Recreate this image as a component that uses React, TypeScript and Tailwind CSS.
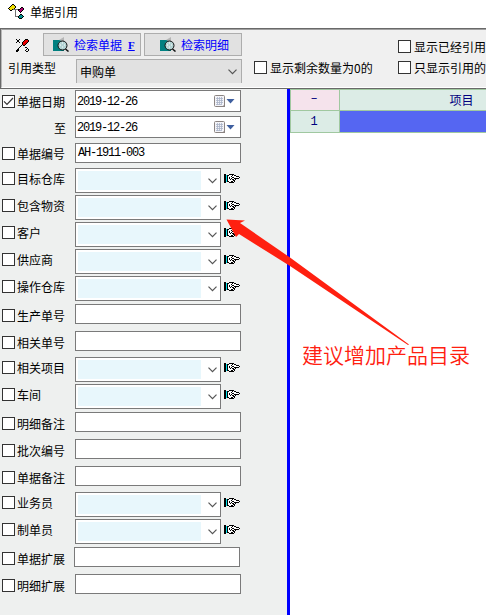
import { clsx } from 'clsx';

type Row = {
  label: string;
  kind: 'date' | 'text' | 'combo';
  size: string;
  value?: string;
  checked?: boolean;
  noCheck?: boolean;
  shift?: boolean;
};

const rows: Row[] = [
  { label: '单据日期', kind: 'date', size: 'h-[26px]', value: '2019-12-26', checked: true },
  { label: '至', kind: 'date', size: 'h-[27px]', value: '2019-12-26', noCheck: true },
  { label: '单据编号', kind: 'text', size: 'h-[25px]', value: 'AH-1911-003' },
  { label: '目标仓库', kind: 'combo', size: 'h-[27px]' },
  { label: '包含物资', kind: 'combo', size: 'h-[27px]' },
  { label: '客户', kind: 'combo', size: 'h-[27px]' },
  { label: '供应商', kind: 'combo', size: 'h-[27px]' },
  { label: '操作仓库', kind: 'combo', size: 'h-[28px]' },
  { label: '生产单号', kind: 'text', size: 'h-[27px]' },
  { label: '相关单号', kind: 'text', size: 'h-[26px]' },
  { label: '相关项目', kind: 'combo', size: 'h-[27px]' },
  { label: '车间', kind: 'combo', size: 'h-[28px]' },
  { label: '明细备注', kind: 'text', size: 'h-[27px]' },
  { label: '批次编号', kind: 'text', size: 'h-[27px]' },
  { label: '单据备注', kind: 'text', size: 'h-[26px]' },
  { label: '业务员', kind: 'combo', size: 'h-[27px]' },
  { label: '制单员', kind: 'combo', size: 'h-[28px]' },
  { label: '单据扩展', kind: 'text', size: 'h-[27px]', shift: true },
  { label: '明细扩展', kind: 'text', size: 'h-[27px]' },
];

const palette: Record<string, string> = {
  k: '#000000',
  w: '#ffffff',
  c: '#00e0e8',
  t: '#009090',
  y: '#f0e000',
  m: '#b00070',
  r: '#e80000',
  g: '#707070',
};

const hand = [
  'kk...kkkkk......',
  'kkckkwwwkwkk....',
  'kkckwwwkwwwwkkk.',
  'kkckwkwwkkwwwwwk',
  'kkckwkwkwwkkkkk.',
  'kkckwwkwkkwk....',
  'kkckwwwwwkk.....',
  'kkckkwwkkwk.....',
  'kk...kkkkk......',
];

const tree = [
  '....kk..........',
  '...kyyk.........',
  '..kyyyyk........',
  '.kyyyyyk.....kk.',
  'kyyyyyk.....kmmk',
  '.kyykgggggkkmmmk',
  '..kk...g..kmmmk.',
  '.......g...kmk..',
  '.......g....k...',
  '.......g........',
  '.......g....kk..',
  '.......g...kttk.',
  '.......gggkttttk',
  '..........ktttk.',
  '...........kkk..',
];

const tools = [
  'k..k.....kkk.',
  '.kk.....krrrk',
  '.kk....krrrrk',
  'k..k..krrrrk.',
  '......krrrk..',
  '......krrk...',
  '.....k.kk....',
  '....k........',
  '...k.....kk..',
  '..k........k.',
  '.kk.......k.k',
  'kkk......k..k',
  'kk........kk.',
];

const PixelIcon = ({ map, className }: { map: string[]; className?: string }) => (
  <svg
    width={map[0].length}
    height={map.length}
    shapeRendering="crispEdges"
    className={clsx('shrink-0', className)}
  >
    {map.flatMap((line, y) =>
      [...line].map((c, x) =>
        c === '.' ? null : <rect key={`${x}-${y}`} x={x} y={y} width="1" height="1" fill={palette[c]} />
      )
    )}
  </svg>
);

const SearchIcon = () => (
  <svg width="16" height="15" className="shrink-0">
    <path d="M0 3h11v11H0z" fill="#008080" />
    <path d="M6 3l5-3v5z" fill="#b5b5b5" />
    <circle cx="9.5" cy="8.500" r="4.500" fill="#b4d4d4" stroke="#111" strokeWidth="1" />
    <path d="M7 8h1M9 6h1M9 10h1M11 8h1" stroke="#fff" />
    <path d="M12.500 12l3 2.500" stroke="#111" strokeWidth="1.5" />
  </svg>
);

const Chevron = () => (
  <svg width="9" height="6" fill="none" stroke="#555" strokeWidth="1.2" className="shrink-0">
    <path d="M.5 .7l4 4 4-4" />
  </svg>
);

const CheckBox = ({ checked }: { checked?: boolean }) => (
  <span className="flex size-[13px] shrink-0 items-center justify-center border border-[#333] bg-white">
    {checked && (
      <svg width="11" height="11" fill="none" stroke="#333" strokeWidth="1.2">
        <path d="M1 5.3l3 3 6-6.3" />
      </svg>
    )}
  </span>
);

const CheckItem = ({ label }: { label: string }) => (
  <label className="flex h-[13px] items-center gap-[3px] whitespace-nowrap leading-[13px]">
    <CheckBox />
    <span>{label}</span>
  </label>
);

const DateIcon = () => (
  <svg width="21" height="13" className="shrink-0">
    <rect x=".5" y=".5" width="10" height="11" rx="1" fill="#f4f4f8" stroke="#8b8482" />
    <path d="M2 3.5h7M2 5.5h7M2 7.5h7M2 9.5h5M3.5 2v8M5.5 2v8M7.5 2v8" stroke="#a9b4c8" strokeWidth=".8" />
    <path d="M8 12l3-3v3z" fill="#8b8482" />
    <path d="M12.500 4h8l-4 4.500z" fill="#3f5f9f" />
  </svg>
);

const Field = ({ row }: { row: Row }) => {
  if (row.kind === 'combo') {
    return (
      <div className="flex">
        <div className="flex h-[25px] w-[146px] items-center border border-[#7a7a7a] bg-white pl-[2px]">
          <div className="h-[19px] w-[123px] bg-[#e8f7fc]" />
          <div className="ml-[7px] mt-[1px]">
            <Chevron />
          </div>
        </div>
        <PixelIcon map={hand} className="ml-[3px] mt-[6px]" />
      </div>
    );
  }
  return (
    <div
      className={clsx(
        'flex w-[166px] border border-[#7a7a7a] bg-white font-["Liberation_Mono",monospace] text-[12px] tracking-[-1.2px]',
        row.kind === 'date' ? 'h-[22px] items-center justify-between pl-[1px] pr-[5px]' : 'h-[20px] pl-[2px] leading-[18px]',
        row.shift && '-ml-px'
      )}
    >
      <span className={clsx(row.kind === 'date' && 'pt-[2px]')}>{row.value}</span>
      {row.kind === 'date' && <DateIcon />}
    </div>
  );
};

const SearchButton = ({ label, hotkey }: { label: string; hotkey?: string }) => (
  <button
    className={clsx(
      'flex h-[23px] w-[98px] items-center border border-[#adadad] bg-[#e1e1e1] text-[#0000ff]',
      hotkey ? 'pl-[9px]' : 'pl-[15px]'
    )}
  >
    <SearchIcon />
    <span className="ml-[5px] leading-[14px]">{label}</span>
    {hotkey && (
      <span className='ml-[6px] pt-px font-["Liberation_Serif",serif] text-[11px] font-bold leading-[13px] underline'>
        {hotkey}
      </span>
    )}
  </button>
);

const Toolbar = () => (
  <div className="flex h-[61px] shrink-0 border-b border-l border-t border-[#696969] bg-[#f0f0f0]">
    <div className="flex w-full border-b border-l border-t border-b-white border-l-[#b8b8b8] border-t-[#a0a0a0]">
      <div className="w-[240px] shrink-0 pt-[3px]">
        <div className="flex">
          <div className="w-[41px] pl-[14px] pt-[6px]">
            <PixelIcon map={tools} />
          </div>
          <SearchButton label="检索单据" hotkey="F" />
          <div className="ml-[3px]">
            <SearchButton label="检索明细" />
          </div>
        </div>
        <div className="mt-[3px] flex">
          <span className="w-[74px] pl-[6px] pt-[2px] leading-[14px]">引用类型</span>
          <div className="flex h-[24px] w-[166px] items-center justify-between border border-b-0 border-[#adadad] bg-[#e1e1e1] pl-[3px] pr-[4px]">
            <span>申购单</span>
            <Chevron />
          </div>
        </div>
      </div>
      <div className="w-[144px] shrink-0 pl-[12px] pt-[31px]">
        <CheckItem label="显示剩余数量为0的" />
      </div>
      <div className="flex flex-col gap-[8px] overflow-hidden pl-[12px] pt-[10px]">
        <CheckItem label="显示已经引用" />
        <CheckItem label="只显示引用的" />
      </div>
    </div>
  </div>
);

const Filters = () => (
  <aside className="w-[287px] shrink-0 bg-[#eef0ef] pt-px">
    {rows.map((row) => (
      <div key={row.label} className={clsx('flex items-start', row.size)}>
        <div
          className={clsx(
            'flex w-[75px] shrink-0 gap-[2px] pl-[2px]',
            row.kind === 'date' ? 'pt-[5px]' : row.value ? 'pt-[4px]' : row.kind === 'combo' ? 'pt-[4px]' : 'pt-[5px]',
            row.kind === 'combo' ? 'leading-[14px]' : 'leading-[13px]',
            row.noCheck && 'justify-end pr-[9px]'
          )}
        >
          {!row.noCheck && <CheckBox checked={row.checked} />}
          <span>{row.label}</span>
        </div>
        <Field row={row} />
      </div>
    ))}
  </aside>
);

const ResultGrid = () => (
  <div className="flex-1 overflow-hidden bg-white text-[#000080]">
    <div className="grid w-[294px] grid-cols-[49px_245px] border-l border-t border-[#a0c8a0] text-center">
      <div className='h-[21px] border-b border-r border-[#a0c8a0] bg-[#f5e3ec] pr-[2px] font-["Liberation_Mono",monospace] leading-[18px]'>–</div>
      <div className="h-[21px] border-b border-[#a0c8a0] bg-[#dcece6] pr-[2px] leading-[19px]">项目</div>
      <div className='h-[22px] border-b border-r border-[#a0c8a0] bg-[#dcece6] pr-[2px] font-["Liberation_Mono",monospace] leading-[22px]'>1</div>
      <div className="h-[22px] border-b border-[#a0c8a0] bg-[#5566f2]" />
    </div>
  </div>
);

const App = () => {
  return (
    <div className='relative flex h-[615px] w-[486px] flex-col overflow-hidden bg-white font-["Noto_Sans_CJK_SC",sans-serif] text-[12px] text-black'>
      <header className="flex h-[28px] shrink-0 items-start gap-[6px] pl-[8px] pt-[4px]">
        <PixelIcon map={tree} />
        <h1 className="leading-[16px]">单据引用</h1>
      </header>
      <Toolbar />
      <main className="flex min-h-0 flex-1">
        <Filters />
        <div className="w-[3px] shrink-0 bg-[#0000ff]" />
        <ResultGrid />
      </main>

      {/* note and arrow laid over the form */}
      <svg className="absolute left-0 top-0" width="486" height="615">
        <path d="M226.500 219.500L245 220.500L240 223L290 257.500L409 344.500L408 345L290 266L239 234L236 237Z" fill="#ff2010" />
      </svg>
      <p className="absolute left-[302px] top-[342px] whitespace-nowrap text-[21px] font-[350] leading-[24px] text-[#ff2010]">
        建议增加产品目录
      </p>
    </div>
  );
};

export default App;
